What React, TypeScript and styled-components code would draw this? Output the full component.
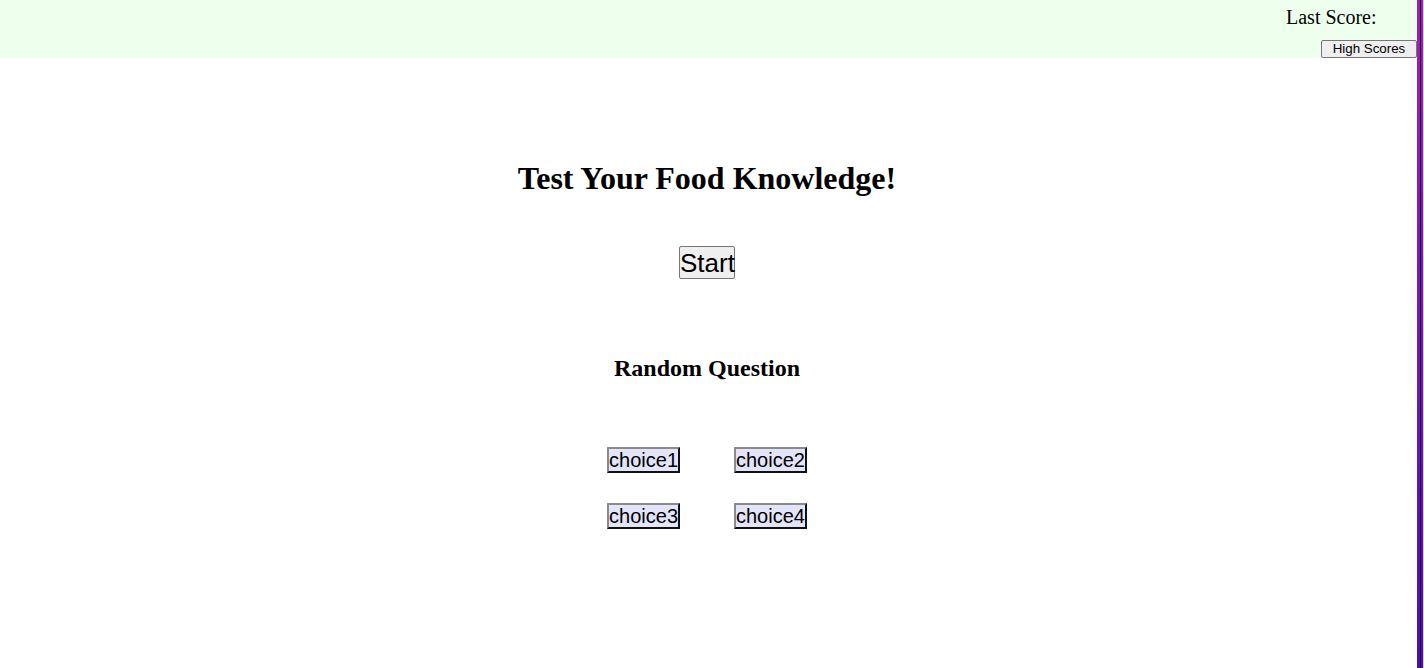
import React from "react";
import styled, { createGlobalStyle } from "styled-components";

const Global = createGlobalStyle`
  html, body { margin: 0; padding: 0; background: #fff; }
  body { font-family: "Liberation Serif", "Times New Roman", serif; color: #000; }
`;

const Page = styled.div`
  display: flex;
  width: 1424px;
  height: 668px;
  overflow: hidden;
`;

const Main = styled.div`
  flex: 1;
  display: flex;
  flex-direction: column;
`;

const Header = styled.header`
  height: 58px;
  background: #eeffee;
  display: flex;
  justify-content: flex-end;
`;

const ScoreBox = styled.div`
  width: 131px;
  display: flex;
  flex-direction: column;
  align-items: flex-start;
`;

const ScoreText = styled.div`
  font-size: 20px;
  line-height: 23px;
  margin-top: 6px;
`;

const SmallButton = styled.button`
  align-self: flex-end;
  margin-top: 11px;
  height: 18px;
  width: 96px;
  padding: 0;
  font-family: "Liberation Sans", Arial, sans-serif;
  font-size: 13.333px;
  background: #efefef;
  border: 1px solid #767676;
  border-radius: 2px;
  color: #000;
  line-height: 14px;
`;

const Content = styled.main`
  display: flex;
  flex-direction: column;
  align-items: center;
  padding-right: 3px;
`;

const Title = styled.h1`
  font-size: 32px;
  font-weight: bold;
  margin: 102px 0 0;
  line-height: 37px;
`;

const StartButton = styled.button`
  margin-top: 49px;
  height: 33px;
  width: 56px;
  padding: 0;
  font-family: "Liberation Sans", Arial, sans-serif;
  font-size: 26px;
  background: #efefef;
  border: 1px solid #767676;
  border-radius: 2px;
  color: #000;
  line-height: 30px;
`;

const Subtitle = styled.h2`
  font-size: 24px;
  font-weight: bold;
  margin: 75px 0 0;
  line-height: 28px;
`;

const ChoiceGrid = styled.div`
  margin-top: 65px;
  display: grid;
  grid-template-columns: repeat(2, auto);
  column-gap: 54px;
  row-gap: 30px;
`;

const ChoiceButton = styled.button`
  height: 26px;
  padding: 0;
  font-family: "Liberation Sans", Arial, sans-serif;
  font-size: 20px;
  line-height: 22px;
  background: #e4e4f8;
  color: #000;
  border-style: solid;
  border-width: 2px;
  border-color: #8a8a8a #111 #111 #8a8a8a;
  border-radius: 0;
`;

const Strip = styled.div`
  width: 7px;
  display: flex;
`;

const StripBand = styled.div<{ $w: number; $dark?: boolean }>`
  width: ${(p) => p.$w}px;
  background: ${(p) =>
    p.$dark ? "#1a1030" : "linear-gradient(to bottom, #a020a8 0%, #7a18b0 45%, #4a10a8 100%)"};
`;

const StripTail = styled.div`
  width: 1px;
  background: #d8c8f0;
`;

export default function App() {
  return (
    <>
      <Global />
      <Page>
        <Main>
          <Header>
            <ScoreBox>
              <ScoreText>Last Score:</ScoreText>
              <SmallButton>High Scores</SmallButton>
            </ScoreBox>
          </Header>
          <Content>
            <Title>Test Your Food Knowledge!</Title>
            <StartButton>Start</StartButton>
            <Subtitle>Random Question</Subtitle>
            <ChoiceGrid>
              <ChoiceButton>choice1</ChoiceButton>
              <ChoiceButton>choice2</ChoiceButton>
              <ChoiceButton>choice3</ChoiceButton>
              <ChoiceButton>choice4</ChoiceButton>
            </ChoiceGrid>
          </Content>
        </Main>
        <Strip>
          <StripBand $w={3} />
          <StripBand $w={1} $dark />
          <StripBand $w={2} />
          <StripTail />
        </Strip>
      </Page>
    </>
  );
}
